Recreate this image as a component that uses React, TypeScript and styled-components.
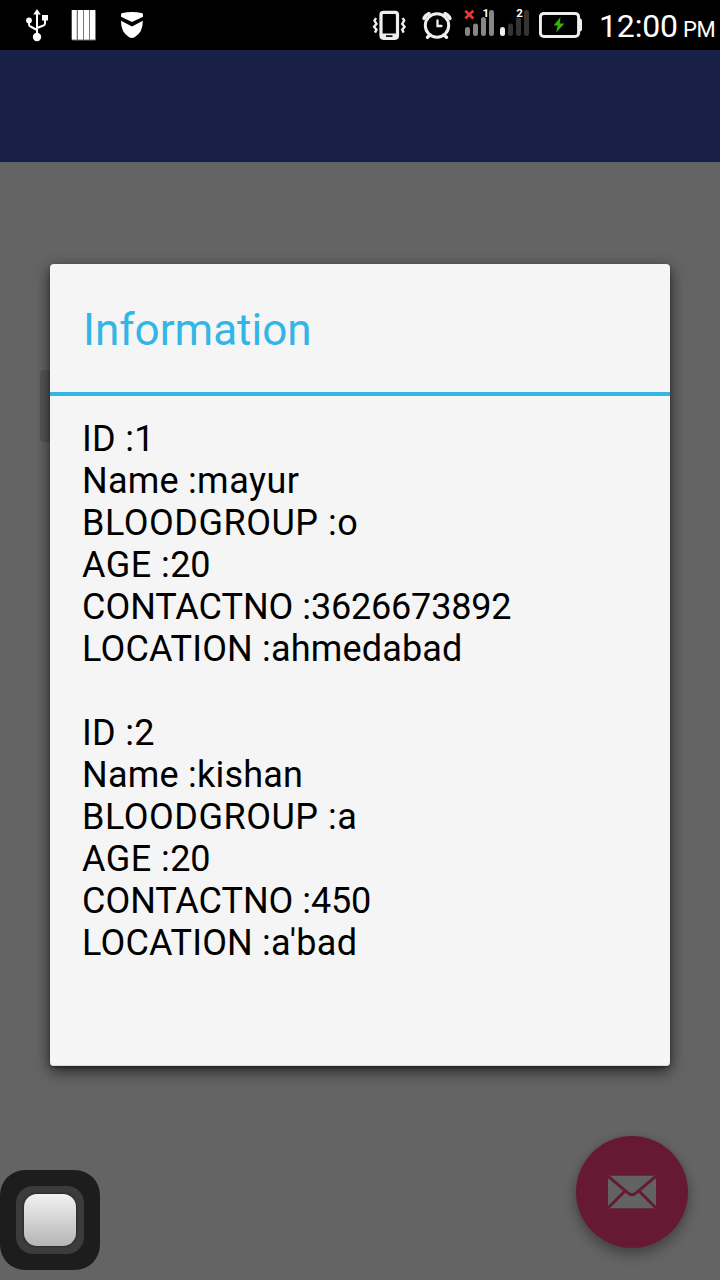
import React from 'react';
import styled, { createGlobalStyle } from 'styled-components';

const GlobalStyle = createGlobalStyle`
  * { box-sizing: border-box; }
  body { margin: 0; background: #000; font-family: Roboto, "Liberation Sans", sans-serif; }
`;

const Screen = styled.div`
  position: relative;
  display: flex;
  flex-direction: column;
  width: 720px;
  height: 1280px;
  overflow: hidden;
  background: #fafafa;
`;

const StatusBar = styled.header`
  display: flex;
  flex: none;
  align-items: flex-start;
  justify-content: space-between;
  height: 50px;
  background: #000;
  color: #fff;
`;

const IconGroup = styled.div<{ $start?: number }>`
  display: flex;
  padding-left: ${(p) => p.$start ?? 0}px;
`;

const StatusIcon = styled.svg<{ $gap?: number }>`
  display: block;
  flex: none;
  height: 50px;
  margin-right: ${(p) => p.$gap ?? 0}px;
`;

const Clock = styled.div`
  display: flex;
  align-items: baseline;
  width: 121px;
  height: 50px;
  line-height: 52px;
  white-space: nowrap;
`;

const Time = styled.span`
  width: 84px;
  font-size: 32px;
  letter-spacing: -0.15px;
`;

const Meridiem = styled.span`
  font-size: 22px;
  letter-spacing: -0.4px;
`;

const AppBar = styled.div`
  flex: none;
  height: 112px;
  background: #3f51b5;
`;

const Content = styled.main`
  display: flex;
  flex: 1;
  flex-direction: column;
  justify-content: space-between;
  padding: 208px 32px 32px 40px;
`;

const ViewButton = styled.div`
  width: 160px;
  height: 72px;
  border-radius: 4px;
  background: #d6d7d7;
`;

const MailButton = styled.div`
  display: flex;
  align-items: center;
  justify-content: center;
  align-self: flex-end;
  width: 112px;
  height: 112px;
  border-radius: 50%;
  background: #ff4081;
  box-shadow: 0 7px 14px rgba(0, 0, 0, 0.3), 0 0 10px rgba(0, 0, 0, 0.12);
`;

const Scrim = styled.div`
  position: absolute;
  inset: 50px 0 0;
  background: rgba(0, 0, 0, 0.6);
`;

const Dialog = styled.section`
  position: absolute;
  top: 264px;
  left: 50px;
  width: 620px;
  height: 802px;
  border-radius: 4px;
  background: #f5f5f5;
  box-shadow: 0 5px 15px rgba(0, 0, 0, 0.66), 0 2px 3px rgba(0, 0, 0, 0.3),
    inset 0 -1px 0 #d8d8d8;
`;

const Title = styled.h1`
  height: 132px;
  margin: 0;
  padding: 0 33px;
  border-bottom: 4px solid #33b5e5;
  color: #33b5e5;
  font-size: 44px;
  font-weight: 400;
  line-height: 132px;
`;

const Message = styled.div`
  padding: 22px 32px;
`;

const Line = styled.div`
  height: 42px;
  color: #000;
  font-size: 36px;
  line-height: 42px;
  white-space: pre;
`;

const Tracked = styled.span<{ $track: number }>`
  letter-spacing: ${(p) => p.$track}px;
`;

const AssistTouch = styled.div`
  position: absolute;
  left: 0;
  bottom: 10px;
  display: flex;
  align-items: center;
  justify-content: center;
  width: 100px;
  height: 100px;
  border-radius: 25px;
  background: #1d1d1d;
`;

const AssistRing = styled.div`
  display: flex;
  align-items: center;
  justify-content: center;
  width: 68px;
  height: 68px;
  border-radius: 17px;
  background: #3c3c3c;
`;

const AssistKey = styled.div`
  width: 52px;
  height: 52px;
  border-radius: 13px;
  background: linear-gradient(#f2f2f2, #b5b5b5);
  box-shadow: 0 0 2px 1px #2a2a2a;
`;

type Field = { label: string; value: string; labelTrack: number; valueTrack: number };

const field = (label: string, value: string, labelTrack: number, valueTrack = -0.2): Field => ({
  label,
  value,
  labelTrack,
  valueTrack,
});

const fields: Field[] = [
  field('ID :', '1', 0.3),
  field('Name :', 'mayur', 0.25, 0.5),
  field('BLOODGROUP :', 'o', 0.52),
  field('AGE :', '20', 0.45),
  field('CONTACTNO :', '3626673892', -0.03),
  field('LOCATION :', 'ahmedabad', 0.2, 0.15),
  field('', '', 0),
  field('ID :', '2', 0.3),
  field('Name :', 'kishan', 0.25, 0.2),
  field('BLOODGROUP :', 'a', 0.52),
  field('AGE :', '20', 0.45),
  field('CONTACTNO :', '450', -0.03),
  field('LOCATION :', "a'bad", 0.2, 0.3),
];

const UsbIcon = () => (
  <StatusIcon $gap={22} width="24" viewBox="25 0 24 50">
    <g fill="none" stroke="#fff" strokeWidth="2" strokeLinejoin="round">
      <path d="M37 12V36M29 20v4.500q0 1.500 1.500 2L37 30M45 18v5.500q0 1.500-1.500 2L37 28" />
    </g>
    <path fill="#fff" d="M37 9l3.700 5.500h-7.400zM42 15h6v5.500h-6z" />
    <circle cx="29" cy="20.500" r="2.900" fill="#fff" />
    <circle cx="37" cy="37" r="4.200" fill="#fff" />
  </StatusIcon>
);

const BarsIcon = () => (
  <StatusIcon $gap={23} width="26" viewBox="71 0 26 50">
    <rect x="72" y="10" width="24" height="30.500" rx="1" fill="#777" />
    <path fill="#fff" d="M71.700 10h5v29.500h-5zM78 10h5v29.500h-5zM84 10h5v29.500h-5zM90 10h5v29.500h-5z" />
  </StatusIcon>
);

const ShieldIcon = () => (
  <StatusIcon width="24" viewBox="120 0 24 50">
    <path fill="#fff" d="M121 14.500q0-1.200 1.300-1.500 9.700-1.800 19.400 0 1.300.3 1.300 1.500v2.300L132 22l-11-5.200z" />
    <path fill="#fff" d="M121 20.800l11 5.600 10.800-5.600q.2 12-8.300 16.400-2.700 1.500-5.400 0-8.300-4.900-8.100-16.400z" />
  </StatusIcon>
);

const VibrateIcon = () => (
  <StatusIcon $gap={15} width="34" viewBox="372 0 34 50">
    <rect x="381" y="12.300" width="16.500" height="26" rx="2.500" fill="none" stroke="#eee" strokeWidth="3.200" />
    <path fill="#eee" d="M381 33.500h16.500v5H381z" />
    <path fill="#111" d="M386 35.200h6.500v1.800H386z" />
    <path fill="none" stroke="#eee" strokeWidth="2.400" d="M376 18l-1.500 2.600 2 3.200-2.400 3 2.400 2.800-1.500 3M402.700 18l1.500 2.600-2 3.200 2.400 3-2.400 2.800 1.500 3" />
  </StatusIcon>
);

const AlarmIcon = () => (
  <StatusIcon $gap={11} width="32" viewBox="421 0 32 50">
    <circle cx="437" cy="25.500" r="11.700" fill="none" stroke="#eee" strokeWidth="3" />
    <path fill="none" stroke="#eee" strokeWidth="2.300" strokeLinecap="round" d="M437.500 20.500v5.500h4" />
    <path fill="none" stroke="#eee" strokeWidth="3.400" strokeLinecap="round" d="M424 18.500q1.500-3.500 5-4.800M450 18.500q-1.500-3.500-5-4.800M430 35l-2.500 2.300M444 35l2.500 2.300" />
  </StatusIcon>
);

const SignalIcon = () => (
  <StatusIcon $gap={10} width="65" viewBox="464 0 65 50">
    <g strokeWidth="5" strokeLinecap="round">
      <path stroke="#868686" d="M467.500 29.500v4M475.500 26v7.500M483.500 19.500v14M491.500 12.500v21" />
      <path stroke="#eee" d="M502.500 29.500v4" />
      <path stroke="#343434" d="M510.500 26v7.500M518.500 19.500v14M526.500 12.500v21" />
    </g>
    <path stroke="#e8382f" strokeWidth="2.800" d="M465.300 10.800l8 7.700M473.300 10.800l-8 7.700" />
    <text x="482.600" y="17" fill="#fff" stroke="#000" strokeWidth="1.500" paintOrder="stroke" fontSize="11.500" fontWeight="700" fontFamily="Roboto, sans-serif">1</text>
    <text x="516.300" y="17" fill="#fff" stroke="#000" strokeWidth="1.500" paintOrder="stroke" fontSize="11.500" fontWeight="700" fontFamily="Roboto, sans-serif">2</text>
  </StatusIcon>
);

const BatteryIcon = () => (
  <StatusIcon $gap={16} width="44" viewBox="539 0 44 50">
    <rect x="540.400" y="13.400" width="38.200" height="23" rx="3.500" fill="none" stroke="#eee" strokeWidth="3" />
    <path fill="#eee" d="M579 18.500h1.300q1.700.3 1.700 2v9q0 1.700-1.700 2H579z" />
    <path fill="#34b40b" d="M560.500 17l-6.800 8.500h4l-1.500 7 8.200-9h-4.600z" />
  </StatusIcon>
);

const Envelope = () => (
  <svg width="48" height="34" viewBox="0 0 48 34">
    <rect y=".8" width="48" height="32.400" rx="1" fill="#f6f6f6" />
    <path fill="none" stroke="#ff4081" strokeWidth="3" d="M0 1.200L19.500 17.500q4.500 4.500 9 0L48 1.200M0 33l16.500-16.500M48 33L31.500 16.500" />
  </svg>
);

export default function App() {
  return (
    <>
      <GlobalStyle />
      <Screen>
        <StatusBar>
          <IconGroup $start={25}>
            <UsbIcon />
            <BarsIcon />
            <ShieldIcon />
          </IconGroup>
          <IconGroup>
            <VibrateIcon />
            <AlarmIcon />
            <SignalIcon />
            <BatteryIcon />
            <Clock>
              <Time>12:00</Time>
              <Meridiem>PM</Meridiem>
            </Clock>
          </IconGroup>
        </StatusBar>
        <AppBar />
        <Content>
          <ViewButton />
          <MailButton>
            <Envelope />
          </MailButton>
        </Content>
        <Scrim />
        <Dialog>
          <Title>Information</Title>
          <Message>
            {fields.map((f, i) => (
              <Line key={i}>
                <Tracked $track={f.labelTrack}>{f.label}</Tracked>
                <Tracked $track={f.valueTrack}>{f.value}</Tracked>
              </Line>
            ))}
          </Message>
        </Dialog>
        <AssistTouch>
          <AssistRing>
            <AssistKey />
          </AssistRing>
        </AssistTouch>
      </Screen>
    </>
  );
}
